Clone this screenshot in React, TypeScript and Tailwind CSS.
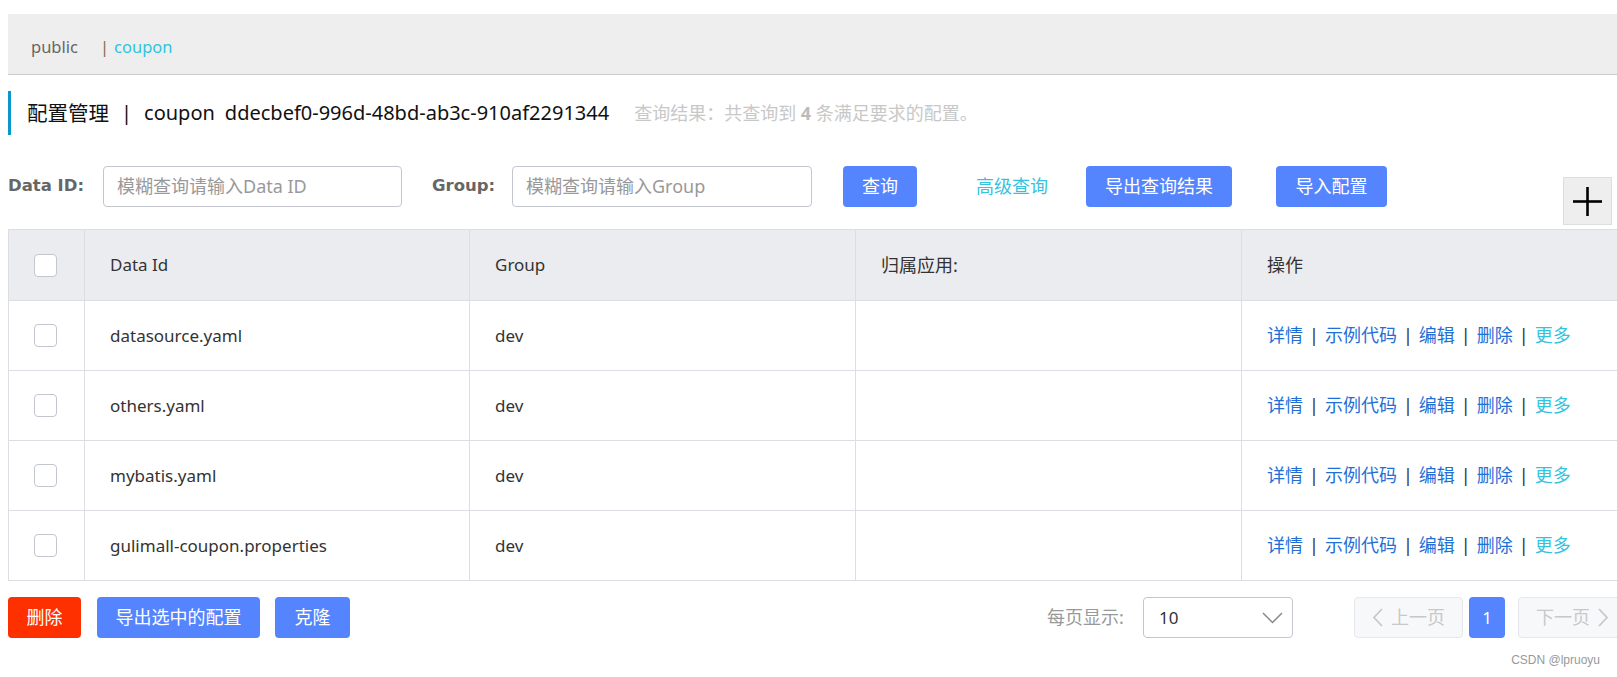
import React from "react";

const rows = [
  "datasource.yaml",
  "others.yaml",
  "mybatis.yaml",
  "gulimall-coupon.properties",
];

function Checkbox() {
  return <div className="w-[23px] h-[23px] rounded-[4px] border border-[#c4c6cf] bg-white" />;
}

function Actions() {
  return (
    <div className="flex items-center text-[18px] text-[#1f6fd6] whitespace-nowrap">
      <span>详情</span>
      <span className="mx-[6px] text-[#333]">|</span>
      <span>示例代码</span>
      <span className="mx-[6px] text-[#333]">|</span>
      <span>编辑</span>
      <span className="mx-[6px] text-[#333]">|</span>
      <span>删除</span>
      <span className="mx-[6px] text-[#333]">|</span>
      <span className="text-[#33c3e0]">更多</span>
    </div>
  );
}

export default function App() {
  return (
    <div
      className="w-full h-[677px] overflow-hidden bg-white text-[#333]"
      style={{ fontFamily: '"Noto Sans", "Noto Sans CJK SC", sans-serif' }}
    >
      <div className="ml-[8px] pt-[14px] overflow-hidden">
        {/* breadcrumb bar */}
        <div className="h-[61px] bg-[#eeeeee] border-b border-[#cccccc] flex items-center pt-[6px] pl-[23px] text-[16.5px]">
          <span className="text-[#666]">public</span>
          <span className="ml-[22px] text-[#8a6a4a]">|</span>
          <span className="ml-[5px] text-[#2ec4e0]">coupon</span>
        </div>

        {/* title */}
        <div className="mt-[16px] h-[44px] border-l-[3px] border-[#0a97cc] flex items-center pl-[16px]">
          <span className="text-[20.5px] text-[#111]">配置管理</span>
          <span className="text-[20px] text-[#111] mx-[12px]">|</span>
          <span className="text-[20px] text-[#111]">coupon</span>
          <span className="text-[20px] text-[#111] ml-[10px]">ddecbef0-996d-48bd-ab3c-910af2291344</span>
          <span className="ml-[25px] text-[18px] text-[#c8c8c8]">
            查询结果：共查询到 <b className="font-bold text-[#bbb]">4</b> 条满足要求的配置。
          </span>
        </div>

        {/* search row */}
        <div className="mt-[31px] flex items-start">
          <div
            className="w-[95px] h-[41px] flex items-center text-[16.5px] font-bold text-[#666]"
            style={{ fontFamily: '"DejaVu Sans", sans-serif' }}
          >
            Data ID:
          </div>
          <div className="w-[299px] h-[41px] border border-[#c4c6cf] rounded-[4px] flex items-center px-[13px] text-[18px] text-[#999]">
            模糊查询请输入Data ID
          </div>
          <div
            className="ml-[30px] w-[80px] h-[41px] flex items-center text-[16.5px] font-bold text-[#666]"
            style={{ fontFamily: '"DejaVu Sans", sans-serif' }}
          >
            Group:
          </div>
          <div className="w-[300px] h-[41px] border border-[#c4c6cf] rounded-[4px] flex items-center px-[13px] text-[18px] text-[#999]">
            模糊查询请输入Group
          </div>
          <div className="ml-[31px] w-[74px] h-[41px] rounded-[4px] bg-[#5584ff] text-white text-[18px] flex items-center justify-center">
            查询
          </div>
          <div className="ml-[59px] w-[72px] h-[41px] flex items-center text-[18px] text-[#33c3e0] whitespace-nowrap">高级查询</div>
          <div className="ml-[38px] w-[146px] h-[41px] rounded-[4px] bg-[#5584ff] text-white text-[18px] flex items-center justify-center">
            导出查询结果
          </div>
          <div className="ml-[44px] w-[111px] h-[41px] rounded-[4px] bg-[#5584ff] text-white text-[18px] flex items-center justify-center">
            导入配置
          </div>
          <div className="ml-[176px] mt-[11px] w-[49px] h-[48px] bg-[#eeeeee] border border-[#dddddd] flex items-center justify-center">
            <svg width="31" height="31" viewBox="0 0 31 31">
              <line x1="15.5" y1="1" x2="15.5" y2="30" stroke="#000" strokeWidth="2.6" />
              <line x1="1" y1="15.5" x2="30" y2="15.5" stroke="#000" strokeWidth="2.6" />
            </svg>
          </div>
        </div>

        {/* table */}
        <table className="mt-[4px] w-[calc(100%+2px)] border-collapse table-fixed text-[17px] text-[#333]">
          <colgroup>
            <col className="w-[76px]" />
            <col className="w-[385px]" />
            <col className="w-[386px]" />
            <col className="w-[386px]" />
            <col />
          </colgroup>
          <thead>
            <tr className="h-[71px] bg-[#ebecf0]">
              <th className="border border-[#dcdee3] pl-[25px] text-left font-normal">
                <Checkbox />
              </th>
              <th className="border border-[#dcdee3] pl-[25px] text-left font-normal">Data Id</th>
              <th className="border border-[#dcdee3] pl-[25px] text-left font-normal">Group</th>
              <th className="border border-[#dcdee3] pl-[25px] text-left font-normal text-[18px]">归属应用:</th>
              <th className="border border-[#dcdee3] pl-[25px] text-left font-normal text-[18px]">操作</th>
            </tr>
          </thead>
          <tbody>
            {rows.map((r) => (
              <tr key={r} className="h-[70px] bg-white">
                <td className="border border-[#dcdee3] pl-[25px]">
                  <Checkbox />
                </td>
                <td className="border border-[#dcdee3] pl-[25px]">{r}</td>
                <td className="border border-[#dcdee3] pl-[25px]">dev</td>
                <td className="border border-[#dcdee3] pl-[25px]"></td>
                <td className="border border-[#dcdee3] pl-[25px]">
                  <Actions />
                </td>
              </tr>
            ))}
          </tbody>
        </table>

        {/* bottom row */}
        <div className="mt-[16px] flex items-center overflow-hidden">
          <div className="w-[1039px] shrink-0 flex items-center">
            <div className="w-[73px] h-[41px] rounded-[4px] bg-[#ff3000] text-white text-[18px] flex items-center justify-center">
              删除
            </div>
            <div className="ml-[16px] w-[163px] h-[41px] rounded-[4px] bg-[#5584ff] text-white text-[18px] flex items-center justify-center">
              导出选中的配置
            </div>
            <div className="ml-[15px] w-[75px] h-[41px] rounded-[4px] bg-[#5584ff] text-white text-[18px] flex items-center justify-center">
              克隆
            </div>
          </div>
          <div className="w-[96px] shrink-0 text-[18px] text-[#999]">每页显示:</div>
          <div className="w-[150px] shrink-0 h-[41px] border border-[#c4c6cf] rounded-[4px] flex items-center justify-between pl-[15px] pr-[9px] text-[17px] text-[#333]">
            <span>10</span>
            <svg width="21" height="12" viewBox="0 0 21 12">
              <polyline points="1,1 10.5,10.5 20,1" fill="none" stroke="#888" strokeWidth="1.5" />
            </svg>
          </div>
          <div className="ml-[61px] w-[109px] shrink-0 h-[41px] rounded-[4px] border border-[#e6e7eb] bg-[#f7f8fa] flex items-center justify-center gap-[7px] text-[18px] text-[#c8c8c8]">
            <svg width="12" height="21" viewBox="0 0 12 21">
              <polyline points="10,2 2,10.5 10,19" fill="none" stroke="#c8c8c8" strokeWidth="1.8" />
            </svg>
            <span>上一页</span>
          </div>
          <div className="ml-[6px] w-[36px] shrink-0 h-[41px] rounded-[4px] bg-[#5584ff] text-white text-[17px] flex items-center justify-center">
            1
          </div>
          <div className="ml-[13px] w-[109px] shrink-0 h-[41px] rounded-[4px] border border-[#e6e7eb] bg-[#f7f8fa] flex items-center justify-center gap-[7px] text-[18px] text-[#c8c8c8]">
            <span>下一页</span>
            <svg width="12" height="21" viewBox="0 0 12 21">
              <polyline points="2,2 10,10.5 2,19" fill="none" stroke="#c8c8c8" strokeWidth="1.8" />
            </svg>
          </div>
        </div>
      </div>
      <div
        className="mt-[13px] text-right pr-[17px] text-[12px] text-[#999]"
        style={{ fontFamily: '"Liberation Sans", sans-serif' }}
      >
        CSDN @lpruoyu
      </div>
    </div>
  );
}
